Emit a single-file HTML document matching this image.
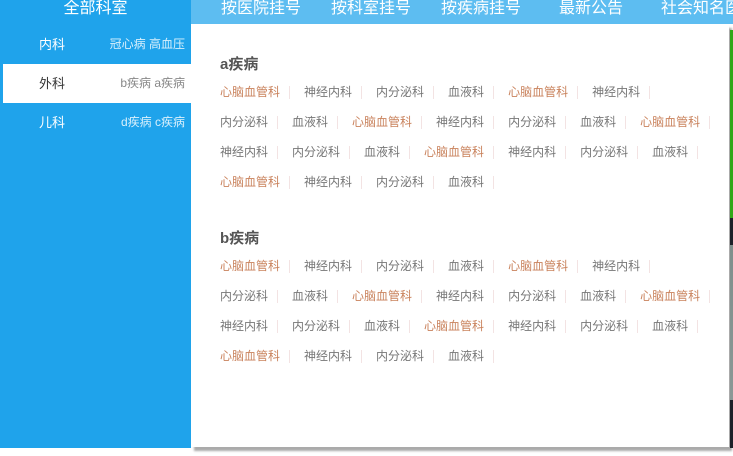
<!DOCTYPE html>
<html><head><meta charset="utf-8"><style>
body{margin:0;width:733px;height:456px;overflow:hidden;background:#fff;font-family:"Liberation Sans","Noto Sans CJK SC",sans-serif;position:relative}
.top{position:absolute;left:0;top:0;width:733px;height:24px;background:#5dbdf1}
.top .all{position:absolute;left:0;top:0;width:191px;height:24px;background:#1fa3eb;color:#fff;font-size:16px;text-align:center;line-height:17px}
.top span{position:absolute;top:0;color:#fff;font-size:16px;line-height:17px;white-space:nowrap}
.side{position:absolute;left:0;top:24px;width:191px;height:424px;background:#1fa3eb}
.row{position:absolute;left:3px;width:188px;height:39px;font-size:13px;color:#fff}
.row .n{position:absolute;left:36px;top:9px}
.row .d{position:absolute;right:6px;top:10px;font-size:12px;color:#d9f0fc}
.row.act{background:#fff;color:#333}
.row.act .d{color:#888}
.panel{position:absolute;left:191px;top:24px;width:538px;height:423px;background:#fff;box-shadow:3px 4px 2px #aaa}
h3{position:absolute;left:220px;margin:0;font-size:15px;font-weight:bold;color:#555}
.it{position:absolute;left:220px;font-size:12px;color:#777;white-space:nowrap}
.it i{font-style:normal;display:inline-block;padding-right:9px;margin-right:14px;border-right:1px solid #f3e3e3;line-height:13px}
.it i.o{color:#c9825c}
.strip{position:absolute;left:730px;top:30px;width:3px;height:418px;background:linear-gradient(#2fa817 0,#2fa817 188px,#1c2129 188px,#1c2129 215px,#7f8f8c 215px,#8a9896 370px,#1c2129 370px)}
</style></head><body>
<div class="top"><div class="all">全部科室</div>
<span style="left:221px">按医院挂号</span><span style="left:331px">按科室挂号</span><span style="left:441px">按疾病挂号</span><span style="left:559px">最新公告</span><span style="left:661px">社会知名医</span></div>
<div class="side"></div>
<div class="row" style="top:25px"><span class="n">内科</span><span class="d">冠心病 高血压</span></div>
<div class="row act" style="top:64px"><span class="n">外科</span><span class="d">b疾病 a疾病</span></div>
<div class="row" style="top:103px"><span class="n">儿科</span><span class="d">d疾病 c疾病</span></div>
<div class="panel"></div>
<div class="strip"></div>
<h3 style="top:53px">a疾病</h3>
<div class="it" style="top:85px"><i class="o">心脑血管科</i><i>神经内科</i><i>内分泌科</i><i>血液科</i><i class="o">心脑血管科</i><i>神经内科</i></div>
<div class="it" style="top:115px"><i>内分泌科</i><i>血液科</i><i class="o">心脑血管科</i><i>神经内科</i><i>内分泌科</i><i>血液科</i><i class="o">心脑血管科</i></div>
<div class="it" style="top:145px"><i>神经内科</i><i>内分泌科</i><i>血液科</i><i class="o">心脑血管科</i><i>神经内科</i><i>内分泌科</i><i>血液科</i></div>
<div class="it" style="top:175px"><i class="o">心脑血管科</i><i>神经内科</i><i>内分泌科</i><i>血液科</i></div>
<h3 style="top:227px">b疾病</h3>
<div class="it" style="top:259px"><i class="o">心脑血管科</i><i>神经内科</i><i>内分泌科</i><i>血液科</i><i class="o">心脑血管科</i><i>神经内科</i></div>
<div class="it" style="top:289px"><i>内分泌科</i><i>血液科</i><i class="o">心脑血管科</i><i>神经内科</i><i>内分泌科</i><i>血液科</i><i class="o">心脑血管科</i></div>
<div class="it" style="top:319px"><i>神经内科</i><i>内分泌科</i><i>血液科</i><i class="o">心脑血管科</i><i>神经内科</i><i>内分泌科</i><i>血液科</i></div>
<div class="it" style="top:349px"><i class="o">心脑血管科</i><i>神经内科</i><i>内分泌科</i><i>血液科</i></div>
</body></html>
